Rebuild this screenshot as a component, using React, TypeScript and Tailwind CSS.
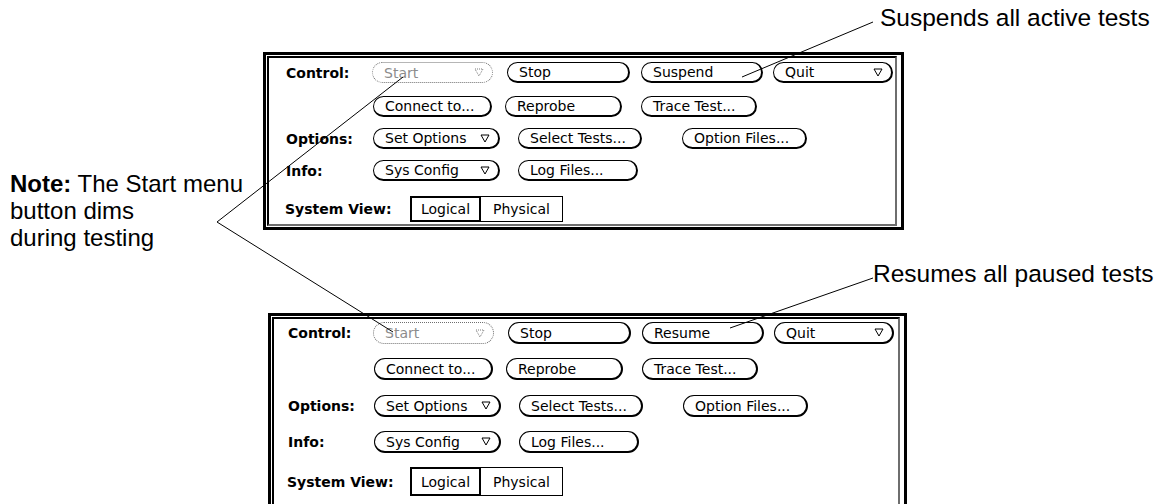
import React from "react"

// OpenLook-style test control panel, shown twice with callouts

function Tri({ dim }: { dim?: boolean }) {
  return (
    <svg width="10" height="9" viewBox="0 0 10 9" className="shrink-0">
      <polygon
        points="1,1 9,1 5,8"
        fill="none"
        stroke={dim ? "#7a7a7a" : "#000"}
        strokeWidth="1"
        strokeDasharray={dim ? "1 1" : undefined}
      />
    </svg>
  )
}

function Btn({ label, cls, menu, dim, h }: { label: string; cls: string; menu?: boolean; dim?: boolean; h: string }) {
  const look = dim
    ? "border border-dotted border-[#6f6f6f] text-[#8c8c8c]"
    : "border border-black border-r-2 border-b-2 text-black"
  return (
    <div className={`${cls} ${h} ${look} shrink-0 flex items-center justify-between pl-[11px] pr-[8px] rounded-full`}>
      <span className="leading-none">{label}</span>
      {menu && <Tri dim={dim} />}
    </div>
  )
}

type PanelCfg = {
  outer: string
  labelCol: string
  viewLabel: string
  btnH: string
  gaps: string[]
  boxH: string
  middle: string
}

function Panel({ c }: { c: PanelCfg }) {
  const Label = ({ t }: { t?: string }) => (
    <div className={`${c.labelCol} shrink-0 font-bold leading-none`}>{t}</div>
  )
  return (
    <div className={`${c.outer} border-[3px] border-black bg-white pt-px pl-px pr-[4px] pb-px`}>
      <div className="border-2 border-black border-r-[#6e6e6e] border-b-[#6e6e6e] text-[14px] font-['DejaVu_Sans',sans-serif] flex flex-col">
        <div className={`${c.gaps[0]} flex items-center`}>
          <Label t="Control:" />
          <Btn h={c.btnH} cls="w-[121px]" label="Start" menu dim />
          <Btn h={c.btnH} cls="w-[123px] ml-[14px]" label="Stop" />
          <Btn h={c.btnH} cls="w-[122px] ml-[11px]" label={c.middle} />
          <Btn h={c.btnH} cls="w-[120px] ml-[10px]" label="Quit" menu />
        </div>
        <div className={`${c.gaps[1]} flex items-center`}>
          <Label />
          <Btn h={c.btnH} cls="w-[119px] ml-[1px]" label="Connect to..." />
          <Btn h={c.btnH} cls="w-[117px] ml-[13px]" label="Reprobe" />
          <Btn h={c.btnH} cls="w-[116px] ml-[19px]" label="Trace Test..." />
        </div>
        <div className={`${c.gaps[2]} flex items-center`}>
          <Label t="Options:" />
          <Btn h={c.btnH} cls="w-[127px] ml-[1px]" label="Set Options" menu />
          <Btn h={c.btnH} cls="w-[124px] ml-[18px]" label="Select Tests..." />
          <Btn h={c.btnH} cls="w-[125px] ml-[40px]" label="Option Files..." />
        </div>
        <div className={`${c.gaps[3]} flex items-center`}>
          <Label t="Info:" />
          <Btn h={c.btnH} cls="w-[127px] ml-[1px]" label="Sys Config" menu />
          <Btn h={c.btnH} cls="w-[120px] ml-[18px]" label="Log Files..." />
        </div>
        <div className={`${c.gaps[4]} flex items-center`}>
          <div className={`${c.viewLabel} shrink-0 font-bold leading-none`}>System View:</div>
          <div className={`${c.boxH} flex`}>
            <div className="w-[71px] border-2 border-black flex items-center justify-center leading-none">Logical</div>
            <div className="w-[82px] border border-l-0 border-black flex items-center justify-center leading-none">Physical</div>
          </div>
        </div>
      </div>
    </div>
  )
}

const topCfg: PanelCfg = {
  outer: "ml-[263px] mt-[52px] w-[641px]",
  labelCol: "w-[103px] pl-[17px]",
  viewLabel: "w-[141px] pl-[16px]",
  btnH: "h-[21px]",
  gaps: ["mt-[4px]", "mt-[13px]", "mt-[11px]", "mt-[11px]", "mt-[15px] mb-[2px]"],
  boxH: "h-[26px]",
  middle: "Suspend",
}

const bottomCfg: PanelCfg = {
  outer: "ml-[268px] mt-[83px] w-[639px]",
  labelCol: "w-[99px] pl-[14px]",
  viewLabel: "w-[136px] pl-[13px]",
  btnH: "h-[22px]",
  gaps: ["mt-[3px]", "mt-[14px]", "mt-[15px]", "mt-[14px]", "mt-[14px] mb-[20px]"],
  boxH: "h-[29px]",
  middle: "Resume",
}

export default function App() {
  return (
    <div className="relative w-[1162px] h-[504px] overflow-hidden bg-white text-black">
      <Panel c={topCfg} />
      <Panel c={bottomCfg} />

      {/* callout text */}
      <div className="absolute left-[880px] top-[6px] text-[24.5px] leading-[24px] font-['Liberation_Sans',Arial,sans-serif] whitespace-nowrap">
        Suspends all active tests
      </div>
      <div className="absolute left-[873px] top-[262px] text-[24.5px] leading-[24px] font-['Liberation_Sans',Arial,sans-serif] whitespace-nowrap">
        Resumes all paused tests
      </div>
      <div className="absolute left-[10px] top-[170px] text-[24px] leading-[27px] font-['Liberation_Sans',Arial,sans-serif] whitespace-nowrap">
        <span className="font-bold">Note:</span> The Start menu
        <br />
        button dims
        <br />
        during testing
      </div>

      {/* leader lines */}
      <svg className="absolute inset-0 pointer-events-none" width="1162" height="504" viewBox="0 0 1162 504">
        <g stroke="#000" strokeWidth="1" fill="none">
          <line x1="873" y1="22" x2="742" y2="77" />
          <line x1="873" y1="278" x2="730" y2="328" />
          <line x1="217" y1="222" x2="403" y2="77" />
          <line x1="217" y1="222" x2="393" y2="332" />
        </g>
      </svg>
    </div>
  )
}
